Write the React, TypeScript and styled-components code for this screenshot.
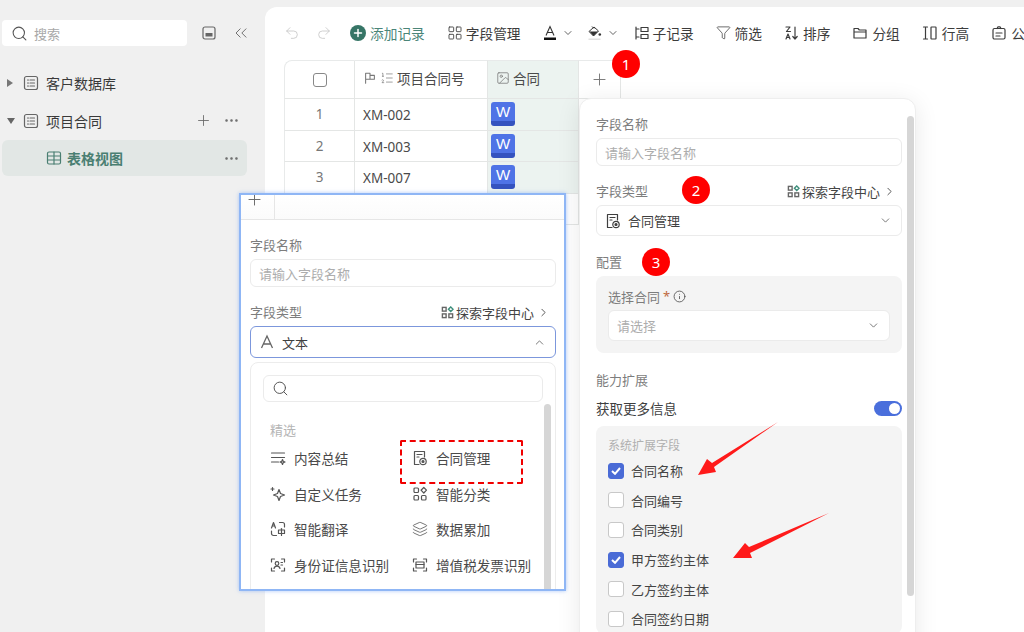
import React from "react";
import styled, { createGlobalStyle } from "styled-components";
import {
  ChevronDown,
  ChevronRight,
  ChevronUp,
  ChevronsLeft,
  Ellipsis,
  Funnel,
  Image,
  Info,
  Layers,
  LayoutGrid,
  ListOrdered,
  Plus,
  Redo2,
  Search,
  Undo2,
} from "lucide-react";

const GlobalStyle = createGlobalStyle`
  html, body {
    margin: 0;
    padding: 0;
    background: #f0f0f0;
  }
  *, *::before, *::after {
    box-sizing: border-box;
  }
  body {
    font-family: "Noto Sans", "Noto Sans CJK SC", sans-serif;
  }
`;

const Page = styled.div`
  position: relative;
  width: 1024px;
  height: 632px;
  overflow: hidden;
  display: flex;
  background: #f0f0f0;
  color: #333;
`;

const Sidebar = styled.aside`
  width: 265px;
  flex: none;
  padding: 20px 0 0 2px;
`;

const SearchRow = styled.div`
  display: flex;
  align-items: center;
`;

const SearchBox = styled.div`
  width: 185px;
  flex: none;
  height: 26px;
  background: #fff;
  border-radius: 4px;
  display: flex;
  align-items: center;
  gap: 6px;
  padding-left: 9px;
  font-size: 13px;
  color: #a8a8a8;
  svg {
    color: #555;
  }
`;

const SearchTools = styled.div`
  display: flex;
  align-items: center;
  gap: 14px;
  margin-left: 14px;
  color: #666;
`;

const Tree = styled.div`
  margin-top: 19px;
  width: 245px;
`;

const TreeRow = styled.div<{ $active?: boolean }>`
  height: 36px;
  margin-bottom: ${(p) => (p.$active ? 0 : 1.5)}px;
  display: flex;
  align-items: center;
  border-radius: 6px;
  font-size: 14px;
  color: ${(p) => (p.$active ? "#4a7f72" : "#3a3a3a")};
  font-weight: ${(p) => (p.$active ? 700 : 400)};
  background: ${(p) => (p.$active ? "#e2e7e5" : "transparent")};
  padding: 0 7px 0 ${(p) => (p.$active ? 44 : 5)}px;
`;

const Caret = styled.span<{ $open?: boolean }>`
  width: 0;
  height: 0;
  ${(p) =>
    p.$open
      ? "border-left: 4px solid transparent; border-right: 4px solid transparent; border-top: 6px solid #666; margin-right: 8px;"
      : "border-top: 4px solid transparent; border-bottom: 4px solid transparent; border-left: 6px solid #777; margin-right: 10px;"}
`;

const TreeLabel = styled.span<{ $tight?: boolean }>`
  margin-left: ${(p) => (p.$tight ? 5 : 7)}px;
  flex: 1;
`;

const RowTools = styled.span`
  display: flex;
  align-items: center;
  gap: 11px;
  color: #666;
`;

const Main = styled.main`
  flex: 1;
  margin-top: 7px;
  background: #fff;
  border-top-left-radius: 12px;
  padding-left: 19px;
  min-width: 0;
`;

const Toolbar = styled.div`
  height: 53px;
  padding-bottom: 2px;
  display: flex;
  align-items: center;
  gap: 22px;
  white-space: nowrap;
  font-size: 13.7px;
  color: #3c3c3c;
  svg {
    flex: none;
  }
`;

const History = styled.div`
  display: flex;
  gap: 16px;
  color: #c4c4c4;
  margin-right: -4px;
`;

const ToolItem = styled.div<{ $accent?: boolean; $gap?: number; $pull?: number }>`
  display: flex;
  align-items: center;
  gap: ${(p) => p.$gap ?? 3}px;
  margin-right: ${(p) => p.$pull ?? 0}px;
  color: ${(p) => (p.$accent ? "#4a8578" : "#3c3c3c")};
`;

const AddDot = styled.span`
  width: 16px;
  height: 16px;
  border-radius: 50%;
  background: #367566;
  color: #fff;
  display: flex;
  align-items: center;
  justify-content: center;
`;

const Sheet = styled.div`
  display: grid;
  grid-template-columns: 71px 133px 91px 42px;
  grid-template-rows: 39px repeat(4, 31.5px);
  width: 337px;
  font-size: 13.5px;
  color: #4a4a4a;
`;

const Cell = styled.div<{ $head?: boolean; $tint?: boolean; $center?: boolean; $corner?: boolean }>`
  display: flex;
  align-items: center;
  justify-content: ${(p) => (p.$center ? "center" : "flex-start")};
  padding: ${(p) => (p.$center ? "0" : p.$head ? "0 8px 3px" : "0 8px")};
  gap: 3px;
  border-bottom: 1px solid #e4e6e5;
  border-right: 1px solid #e4e6e5;
  border-top: ${(p) => (p.$head ? "1px solid #e8eaea" : "none")};
  border-left: ${(p) => (p.$corner ? "1px solid #e8eaea" : "none")};
  border-top-left-radius: ${(p) => (p.$corner && p.$head ? "8px" : "0")};
  background: ${(p) => (p.$tint ? "#ecf3f0" : "#fff")};
  color: ${(p) => (p.$center ? "#777" : "#4a4a4a")};
  svg {
    color: #777;
    flex: none;
  }
`;

const CodeText = styled.span`
  margin-top: 2px;
`;

const CheckOutline = styled.span`
  width: 14px;
  height: 14px;
  border: 1.2px solid #888;
  border-radius: 3px;
`;

const WordTile = styled.span`
  width: 24px;
  height: 24px;
  margin-left: -5px;
  border-radius: 3px;
  background: linear-gradient(#4f73e6 0 80%, #3553bf 80% 100%);
  color: #fff;
  font-family: "Liberation Sans", sans-serif;
  font-size: 15px;
  display: flex;
  justify-content: center;
  line-height: 19px;
`;

const Popover = styled.section`
  position: absolute;
  left: 579px;
  top: 98px;
  width: 337px;
  height: 560px;
  background: #fff;
  border: 1px solid #eeeeee;
  border-radius: 12px;
  padding: 16px 14px 0 16px;
  box-shadow: 0 4px 24px rgba(0, 0, 0, 0.09);
`;

const Scrollbar = styled.div<{ $left: number; $top: number; $height: number }>`
  position: absolute;
  left: ${(p) => p.$left}px;
  top: ${(p) => p.$top}px;
  width: 7px;
  height: ${(p) => p.$height}px;
  background: #d6d6d6;
  border-radius: 4px;
`;

const Label = styled.div<{ $mt?: number }>`
  height: 18px;
  line-height: 18px;
  font-size: 13px;
  color: #7d7d7d;
  margin-top: ${(p) => p.$mt ?? 0}px;
`;

const SmallLabel = styled.div`
  height: 18px;
  line-height: 18px;
  font-size: 12px;
  color: #b0b0b0;
  margin-bottom: 1px;
`;

const LabelRow = styled.div<{ $mt?: number }>`
  display: flex;
  justify-content: space-between;
  align-items: center;
  height: 18px;
  margin-top: ${(p) => p.$mt ?? 0}px;
`;

const Explore = styled.div`
  display: flex;
  align-items: center;
  gap: 2px;
  font-size: 13px;
  color: #444;
  margin-right: 5px;
  svg:last-child {
    margin-left: 1px;
    color: #555;
  }
`;

const Field = styled.div<{ $h: number; $mt?: number; $focus?: boolean; $muted?: boolean; $w?: string }>`
  height: ${(p) => p.$h}px;
  width: ${(p) => p.$w ?? "306px"};
  margin-top: ${(p) => p.$mt ?? 0}px;
  border: 1px solid ${(p) => (p.$focus ? "#7c97dc" : "#ebebeb")};
  border-radius: 6px;
  background: #fff;
  display: flex;
  align-items: center;
  gap: 7px;
  padding: 0 9px 0 8px;
  font-size: 13px;
  color: ${(p) => (p.$muted ? "#adadad" : "#3f3f3f")};
`;

const Trail = styled.span`
  margin-left: auto;
  display: flex;
  color: #666;
`;

const GrayBox = styled.div<{ $mt?: number; $pt?: number; $pb?: number }>`
  width: 306px;
  margin-top: ${(p) => p.$mt ?? 0}px;
  background: #f4f4f4;
  border-radius: 8px;
  padding: ${(p) => p.$pt ?? 11}px 12px ${(p) => p.$pb ?? 0}px;
`;

const Required = styled.div`
  display: flex;
  align-items: center;
  gap: 3px;
  height: 18px;
  font-size: 13px;
  color: #7d7d7d;
  span {
    color: #c0693e;
  }
  svg {
    color: #555;
  }
`;

const ToggleRow = styled.div`
  display: flex;
  align-items: center;
  justify-content: space-between;
  margin-top: 10px;
  height: 18px;
  font-size: 13.5px;
  color: #3f3f3f;
  width: 306px;
`;

const Toggle = styled.span`
  width: 28px;
  height: 15px;
  border-radius: 8px;
  background: #4a6fdc;
  position: relative;
  &::after {
    content: "";
    position: absolute;
    right: 2px;
    top: 2px;
    width: 11px;
    height: 11px;
    border-radius: 50%;
    background: #fff;
  }
`;

const CheckRow = styled.div`
  height: 29.6px;
  display: flex;
  align-items: center;
  gap: 7px;
  font-size: 13px;
  color: #444;
`;

const CheckBox = styled.span<{ $on?: boolean }>`
  width: 16px;
  height: 16px;
  border-radius: 3px;
  background: ${(p) => (p.$on ? "#4a6bd6" : "#fff")};
  border: 1px solid ${(p) => (p.$on ? "#4a6bd6" : "#c8c8c8")};
  display: flex;
  align-items: center;
  justify-content: center;
`;

const Inset = styled.section`
  position: absolute;
  left: 239px;
  top: 193px;
  width: 327px;
  height: 398px;
  background: #fff;
  border: 2px solid #8fb6f5;
  box-shadow: 0 0 4px rgba(120, 165, 245, 0.6);
  overflow: hidden;
`;

const InsetHead = styled.div`
  height: 25px;
  border-bottom: 1px solid #e6e6e6;
  background: linear-gradient(#fff, #fbfbfb);
`;

const InsetPlus = styled.div`
  width: 34px;
  height: 24px;
  border-right: 1px solid #e6e6e6;
  display: flex;
  justify-content: center;
  color: #666;
  svg {
    margin: -5px 6px 0 0;
  }
`;

const InsetBody = styled.div`
  padding: 16px 9px 0;
`;

const Menu = styled.div`
  position: relative;
  margin-top: 4px;
  width: 306px;
  height: 240px;
  border: 1px solid #ececec;
  border-radius: 8px;
  padding: 12px 12px 0;
`;

const MenuSearch = styled.div`
  width: 280px;
  height: 27px;
  border: 1px solid #ebebeb;
  border-radius: 6px;
  display: flex;
  align-items: center;
  padding-left: 8px;
  color: #555;
`;

const MenuHeading = styled.div`
  margin: 19px 0 0 7px;
  height: 18px;
  line-height: 18px;
  font-size: 13px;
  color: #b5b5b5;
`;

const MenuGrid = styled.div`
  display: grid;
  grid-template-columns: 142px 1fr;
  grid-auto-rows: 35.5px;
  margin: 1.5px 0 0 7px;
  font-size: 13.6px;
  color: #4a4a4a;
`;

const MenuItem = styled.div<{ $marked?: boolean }>`
  position: relative;
  display: flex;
  align-items: center;
  gap: 8px;
  white-space: nowrap;
  svg {
    flex: none;
    color: #555;
  }
  ${(p) =>
    p.$marked
      ? `&::before {
          content: "";
          position: absolute;
          left: -12px;
          top: -1px;
          width: 123px;
          height: 44px;
          border: 2px dashed #f00000;
          border-radius: 2px;
        }`
      : ""}
`;

const Badge = styled.span<{ $x: number; $y: number }>`
  position: absolute;
  left: ${(p) => p.$x - 14}px;
  top: ${(p) => p.$y - 14}px;
  width: 28px;
  height: 28px;
  border-radius: 50%;
  background: #ff0000;
  color: #fff;
  font-size: 15px;
  display: flex;
  align-items: center;
  justify-content: center;
`;

const ArrowSvg = styled.svg`
  position: absolute;
  left: 0;
  top: 0;
  pointer-events: none;
`;

const Ico = ({ size = 16, children }: { size?: number; children: React.ReactNode }) => (
  <svg
    width={size}
    height={size}
    viewBox="0 0 16 16"
    fill="none"
    stroke="currentColor"
    strokeWidth="1.2"
    strokeLinecap="round"
    strokeLinejoin="round"
  >
    {children}
  </svg>
);

const BookIcon = () => (
  <Ico>
    <rect x="1.5" y="1.5" width="13" height="13" rx="2" stroke="#666" />
    <path d="M4.5 5h1M7 5h4.5M4.5 8h1M7 8h4.5M4.5 11h1M7 11h4.5" stroke="#666" />
  </Ico>
);

const PanelIcon = () => (
  <Ico>
    <rect x="2" y="2" width="12" height="12" rx="2" />
    <rect x="4.5" y="8" width="7" height="3.5" fill="currentColor" stroke="none" />
  </Ico>
);

const GridViewIcon = () => (
  <Ico>
    <rect x="1.5" y="2" width="13" height="12" rx="1.5" />
    <path d="M1.5 6h13M1.5 10h13M8 2v12" />
  </Ico>
);

const FlagIcon = () => (
  <Ico size={14}>
    <path d="M3 14V2.5h5v7H3M8 5h5v4.5H8" />
  </Ico>
);

const TextColorIcon = () => (
  <svg width="14" height="16" viewBox="0 0 14 16" fill="none">
    <path d="M3 10.5 7 1.5l4 9M4.5 7.5h5" stroke="#333" strokeWidth="1.1" />
    <rect x="1" y="12.5" width="12" height="2.5" fill="#111" />
  </svg>
);

const FillIcon = () => (
  <svg width="14" height="16" viewBox="0 0 14 16" fill="none">
    <path d="M4 1.5 6 3.5M6 2 1 6.5l4.5 4.5 5-5z" stroke="#333" strokeWidth="1" />
    <path d="M1.5 6.5h8.5l-4.5 4.5z" fill="#333" />
    <circle cx="11.8" cy="9.5" r="1.3" fill="#333" />
    <rect x="0.5" y="13.5" width="12" height="1.5" fill="#e2e2e2" />
  </svg>
);

const SubRecordIcon = () => (
  <Ico>
    <path d="M2 2v12M2 4h3M2 12h3" />
    <rect x="7" y="2.5" width="7" height="4" />
    <rect x="7" y="9.5" width="7" height="4" />
  </Ico>
);

const SortIcon = () => (
  <Ico>
    <path d="M2 2h4L2.5 6.5H6.5M2 14l2-5 2 5M2.6 12.5h2.8M11 2v12M8.8 11.5 11 14l2.2-2.5" />
  </Ico>
);

const FolderIcon = () => (
  <Ico>
    <path d="M2 3.5h4l1.3 1.5H14v8H2zM2 7h12" />
  </Ico>
);

const RowHeightIcon = () => (
  <Ico>
    <path d="M1.5 2h4M1.5 14h4M3.5 2v12" />
    <rect x="9" y="2" width="5" height="12" rx="0.5" />
  </Ico>
);

const ClipIcon = () => (
  <Ico>
    <rect x="2" y="3.5" width="12" height="10.5" rx="1.5" />
    <path d="M6 3.5 7 1.8h2l1 1.7M5 8h6M5 11h4" />
  </Ico>
);

const ExploreIcon = () => (
  <svg width="13" height="13" viewBox="0 0 14 14" fill="none" stroke="#666" strokeWidth="1.5">
    <rect x="1.5" y="1.5" width="4" height="4" />
    <rect x="1.5" y="8.5" width="4" height="4" />
    <rect x="8.5" y="8.5" width="4" height="4" />
    <path d="M10.5 1 13 3.5 10.5 6 8 3.5z" stroke="#3f8f7c" />
  </svg>
);

const ContractIcon = () => (
  <Ico>
    <path d="M7 14.5H2.5v-13h10V7" />
    <path d="M5 4.5h5M5 7h2" />
    <circle cx="11" cy="11.5" r="3.2" />
    <circle cx="11" cy="11.5" r="1" fill="currentColor" />
  </Ico>
);

const LetterIcon = () => (
  <svg width="16" height="16" viewBox="0 0 16 16" fill="none" stroke="#666" strokeWidth="1.3">
    <path d="M2.5 14 8 2l5.5 12M4.5 10h7" />
  </svg>
);

const SummaryIcon = () => (
  <Ico>
    <path d="M1.5 3h13M1.5 7.5h13M1.5 12h7" />
    <path d="M12.5 9.5l.7 1.8 1.8.7-1.8.7-.7 1.8-.7-1.8-1.8-.7 1.8-.7z" />
  </Ico>
);

const SparkIcon = () => (
  <Ico>
    <path d="M9 3.5 10.5 7.5 14.5 9 10.5 10.5 9 14.5 7.5 10.5 3.5 9 7.5 7.5z" />
    <path d="M2.5 1.5v3M1 3h3" />
  </Ico>
);

const ClassifyIcon = () => (
  <Ico>
    <rect x="2" y="2" width="4.5" height="4.5" rx="1" />
    <rect x="2" y="9.5" width="4.5" height="4.5" rx="1" />
    <rect x="9.5" y="9.5" width="4.5" height="4.5" rx="1" />
    <path d="M11.8 1.5 14.5 4.2 11.8 7 9 4.2z" />
  </Ico>
);

const TranslateIcon = () => (
  <Ico>
    <path d="M1.5 7 3.5 1.5 5.5 7M2.2 5h2.6M9.5 1.5h3a2 2 0 0 1 2 2V6M6.5 14.5h-3a2 2 0 0 1-2-2V10" />
    <rect x="8.5" y="9" width="6" height="3.5" />
    <path d="M11.5 7.5v7" />
  </Ico>
);

const IdCardIcon = () => (
  <Ico>
    <path d="M1.5 5V2h3M11.5 2h3v3M14.5 11v3h-3M4.5 14h-3v-3" />
    <circle cx="7" cy="6.5" r="1.8" />
    <path d="M4 11.5c.4-1.6 1.6-2.4 3-2.4s2.6.8 3 2.4M11 5.5h1.5M11 8h1.5" />
  </Ico>
);

const InvoiceIcon = () => (
  <Ico>
    <path d="M1.5 5V2h3M11.5 2h3v3M14.5 11v3h-3M4.5 14h-3v-3" />
    <rect x="4" y="5" width="8" height="6" />
    <path d="M4 7.5h8" />
  </Ico>
);

const rows = [
  { no: "1", code: "XM-002" },
  { no: "2", code: "XM-003" },
  { no: "3", code: "XM-007" },
];

const menuItems = [
  { icon: <SummaryIcon />, label: "内容总结" },
  { icon: <ContractIcon />, label: "合同管理", marked: true },
  { icon: <SparkIcon />, label: "自定义任务" },
  { icon: <ClassifyIcon />, label: "智能分类" },
  { icon: <TranslateIcon />, label: "智能翻译" },
  { icon: <Layers size={16} strokeWidth={1.2} />, label: "数据累加" },
  { icon: <IdCardIcon />, label: "身份证信息识别" },
  { icon: <InvoiceIcon />, label: "增值税发票识别" },
];

const extFields = [
  { label: "合同名称", on: true },
  { label: "合同编号" },
  { label: "合同类别" },
  { label: "甲方签约主体", on: true },
  { label: "乙方签约主体" },
  { label: "合同签约日期" },
];

const FieldNameBlock = () => (
  <>
    <Label>字段名称</Label>
    <Field $h={28} $mt={5} $muted>
      请输入字段名称
    </Field>
  </>
);

const TypeHeading = () => (
  <LabelRow $mt={16}>
    <Label>字段类型</Label>
    <Explore>
      <ExploreIcon />
      探索字段中心
      <ChevronRight size={13} strokeWidth={1.8} />
    </Explore>
  </LabelRow>
);

export default function App() {
  return (
    <Page>
      <GlobalStyle />
      <Sidebar>
        <SearchRow>
          <SearchBox>
            <Search size={17} strokeWidth={1.5} />
            搜索
          </SearchBox>
          <SearchTools>
            <PanelIcon />
            <ChevronsLeft size={20} strokeWidth={1.1} />
          </SearchTools>
        </SearchRow>
        <Tree>
          <TreeRow>
            <Caret />
            <BookIcon />
            <TreeLabel>客户数据库</TreeLabel>
          </TreeRow>
          <TreeRow>
            <Caret $open />
            <BookIcon />
            <TreeLabel>项目合同</TreeLabel>
            <RowTools>
              <Plus size={17} strokeWidth={1.2} />
              <Ellipsis size={17} strokeWidth={1.6} />
            </RowTools>
          </TreeRow>
          <TreeRow $active>
            <GridViewIcon />
            <TreeLabel $tight>表格视图</TreeLabel>
            <RowTools>
              <Ellipsis size={17} strokeWidth={1.6} color="#666" />
            </RowTools>
          </TreeRow>
        </Tree>
      </Sidebar>

      <Main>
        <Toolbar>
          <History>
            <Undo2 size={16} strokeWidth={1.2} />
            <Redo2 size={16} strokeWidth={1.2} />
          </History>
          <ToolItem $accent $gap={4}>
            <AddDot>
              <Plus size={12} strokeWidth={3} />
            </AddDot>
            添加记录
          </ToolItem>
          <ToolItem>
            <LayoutGrid size={16} strokeWidth={1.3} />
            字段管理
          </ToolItem>
          <ToolItem $gap={5} $pull={-8}>
            <TextColorIcon />
            <ChevronDown size={12} strokeWidth={1.6} />
          </ToolItem>
          <ToolItem $gap={5} $pull={-7}>
            <FillIcon />
            <ChevronDown size={12} strokeWidth={1.6} />
          </ToolItem>
          <ToolItem>
            <SubRecordIcon />
            子记录
          </ToolItem>
          <ToolItem $gap={4}>
            <Funnel size={15} strokeWidth={1.2} />
            筛选
          </ToolItem>
          <ToolItem>
            <SortIcon />
            排序
          </ToolItem>
          <ToolItem $gap={4}>
            <FolderIcon />
            分组
          </ToolItem>
          <ToolItem $gap={4}>
            <RowHeightIcon />
            行高
          </ToolItem>
          <ToolItem $gap={4}>
            <ClipIcon />
            公
          </ToolItem>
        </Toolbar>

        <Sheet>
          <Cell $head $center $corner>
            <CheckOutline />
          </Cell>
          <Cell $head>
            <FlagIcon />
            <ListOrdered size={14} strokeWidth={1.2} />
            项目合同号
          </Cell>
          <Cell $head $tint>
            <Image size={14} strokeWidth={1.3} />
            合同
          </Cell>
          <Cell $head $center>
            <Plus size={19} strokeWidth={1.2} />
          </Cell>
          {rows.map((r) => (
            <React.Fragment key={r.no}>
              <Cell $center $corner>{r.no}</Cell>
              <Cell>
                <CodeText>{r.code}</CodeText>
              </Cell>
              <Cell $tint>
                <WordTile>W</WordTile>
              </Cell>
              <span />
            </React.Fragment>
          ))}
          <Cell $corner />
          <Cell />
          <Cell />
          <span />
        </Sheet>
      </Main>

      <Popover>
        <FieldNameBlock />
        <TypeHeading />
        <Field $h={31} $mt={5}>
          <ContractIcon />
          合同管理
          <Trail>
            <ChevronDown size={13} strokeWidth={1.6} />
          </Trail>
        </Field>
        <Label $mt={17}>配置</Label>
        <GrayBox $mt={5} $pb={12}>
          <Required>
            选择合同 <span>*</span> <Info size={13} strokeWidth={1.6} />
          </Required>
          <Field $h={31} $mt={5} $muted $w="282px">
            请选择
            <Trail>
              <ChevronDown size={13} strokeWidth={1.6} />
            </Trail>
          </Field>
        </GrayBox>
        <Label $mt={18}>能力扩展</Label>
        <ToggleRow>
          获取更多信息
          <Toggle />
        </ToggleRow>
        <GrayBox $mt={9} $pt={11}>
          <SmallLabel>系统扩展字段</SmallLabel>
          {extFields.map((f) => (
            <CheckRow key={f.label}>
              <CheckBox $on={f.on}>
                {f.on && (
                  <svg width="10" height="8" viewBox="0 0 10 8" fill="none" stroke="#fff" strokeWidth="2">
                    <path d="M1 4l3 2.8L9 1" />
                  </svg>
                )}
              </CheckBox>
              {f.label}
            </CheckRow>
          ))}
        </GrayBox>
        <Scrollbar $left={327} $top={17} $height={480} />
      </Popover>

      <Inset>
        <InsetHead>
          <InsetPlus>
            <Plus size={19} strokeWidth={1.2} />
          </InsetPlus>
        </InsetHead>
        <InsetBody>
          <FieldNameBlock />
          <TypeHeading />
          <Field $h={32} $mt={5} $focus>
            <LetterIcon />
            文本
            <Trail>
              <ChevronUp size={13} strokeWidth={1.6} />
            </Trail>
          </Field>
          <Menu>
            <MenuSearch>
              <Search size={17} strokeWidth={1.4} />
            </MenuSearch>
            <MenuHeading>精选</MenuHeading>
            <MenuGrid>
              {menuItems.map((m) => (
                <MenuItem key={m.label} $marked={m.marked}>
                  {m.icon}
                  {m.label}
                </MenuItem>
              ))}
            </MenuGrid>
            <Scrollbar $left={293} $top={41} $height={200} />
          </Menu>
        </InsetBody>
      </Inset>

      <Badge $x={626} $y={64}>1</Badge>
      <Badge $x={696} $y={190}>2</Badge>
      <Badge $x={656} $y={262}>3</Badge>

      <ArrowSvg width="1024" height="632" viewBox="0 0 1024 632">
        <polygon points="778,422 712,463 707,459 698,475 716,472 714,467" fill="#ff1a1a" />
        <polygon points="829,513 749,547 745,543 733,558 752,558 750,553" fill="#ff1a1a" />
      </ArrowSvg>
    </Page>
  );
}
